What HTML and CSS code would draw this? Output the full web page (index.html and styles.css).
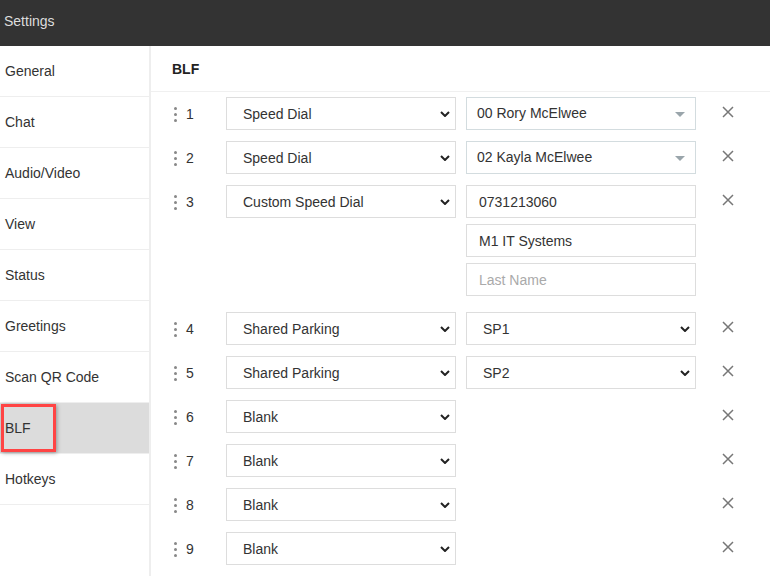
FILE: index.html
```html
<!DOCTYPE html>
<html lang="en">
<head>
    <meta charset="UTF-8">
    <title>Settings</title>
    <link rel="stylesheet" href="styles.css">
</head>
<body>

<div class="topbar">Settings</div>

<div class="layout">
    <!-- Menu laterale -->
    <ul class="sidebar">
        <li>General</li>
        <li>Chat</li>
        <li>Audio/Video</li>
        <li>View</li>
        <li>Status</li>
        <li>Greetings</li>
        <li>Scan QR Code</li>
        <li class="active">BLF</li>
        <li>Hotkeys</li>
    </ul>

    <div class="main">
        <h2>BLF</h2>

        <div class="rows">
            <!-- 1 -->
            <div class="row">
                <div class="num"><span class="handle"><i></i><i></i><i></i></span>1</div>
                <div class="sel"><select><option>Speed Dial</option></select><svg viewBox="0 0 10 6"><path d="M1 1l4 4 4-4"/></svg></div>
                <div class="combo">00 Rory McElwee<span class="caret"></span></div>
                <svg class="remove" viewBox="0 0 12 12"><path d="M1 1l10 10M11 1L1 11"/></svg>
            </div>

            <!-- 2 -->
            <div class="row">
                <div class="num"><span class="handle"><i></i><i></i><i></i></span>2</div>
                <div class="sel"><select><option>Speed Dial</option></select><svg viewBox="0 0 10 6"><path d="M1 1l4 4 4-4"/></svg></div>
                <div class="combo">02 Kayla McElwee<span class="caret"></span></div>
                <svg class="remove" viewBox="0 0 12 12"><path d="M1 1l10 10M11 1L1 11"/></svg>
            </div>

            <!-- 3 -->
            <div class="row tall">
                <div class="num"><span class="handle"><i></i><i></i><i></i></span>3</div>
                <div class="sel"><select><option>Custom Speed Dial</option></select><svg viewBox="0 0 10 6"><path d="M1 1l4 4 4-4"/></svg></div>
                <div class="stack">
                    <input type="text" value="0731213060">
                    <input type="text" value="M1 IT Systems">
                    <input type="text" placeholder="Last Name">
                </div>
                <svg class="remove" viewBox="0 0 12 12"><path d="M1 1l10 10M11 1L1 11"/></svg>
            </div>

            <!-- 4 -->
            <div class="row">
                <div class="num"><span class="handle"><i></i><i></i><i></i></span>4</div>
                <div class="sel"><select><option>Shared Parking</option></select><svg viewBox="0 0 10 6"><path d="M1 1l4 4 4-4"/></svg></div>
                <div class="sel"><select><option>SP1</option></select><svg viewBox="0 0 10 6"><path d="M1 1l4 4 4-4"/></svg></div>
                <svg class="remove" viewBox="0 0 12 12"><path d="M1 1l10 10M11 1L1 11"/></svg>
            </div>

            <!-- 5 -->
            <div class="row">
                <div class="num"><span class="handle"><i></i><i></i><i></i></span>5</div>
                <div class="sel"><select><option>Shared Parking</option></select><svg viewBox="0 0 10 6"><path d="M1 1l4 4 4-4"/></svg></div>
                <div class="sel"><select><option>SP2</option></select><svg viewBox="0 0 10 6"><path d="M1 1l4 4 4-4"/></svg></div>
                <svg class="remove" viewBox="0 0 12 12"><path d="M1 1l10 10M11 1L1 11"/></svg>
            </div>

            <!-- 6 -->
            <div class="row">
                <div class="num"><span class="handle"><i></i><i></i><i></i></span>6</div>
                <div class="sel"><select><option>Blank</option></select><svg viewBox="0 0 10 6"><path d="M1 1l4 4 4-4"/></svg></div>
                <div class="empty"></div>
                <svg class="remove" viewBox="0 0 12 12"><path d="M1 1l10 10M11 1L1 11"/></svg>
            </div>

            <!-- 7 -->
            <div class="row">
                <div class="num"><span class="handle"><i></i><i></i><i></i></span>7</div>
                <div class="sel"><select><option>Blank</option></select><svg viewBox="0 0 10 6"><path d="M1 1l4 4 4-4"/></svg></div>
                <div class="empty"></div>
                <svg class="remove" viewBox="0 0 12 12"><path d="M1 1l10 10M11 1L1 11"/></svg>
            </div>

            <!-- 8 -->
            <div class="row">
                <div class="num"><span class="handle"><i></i><i></i><i></i></span>8</div>
                <div class="sel"><select><option>Blank</option></select><svg viewBox="0 0 10 6"><path d="M1 1l4 4 4-4"/></svg></div>
                <div class="empty"></div>
                <svg class="remove" viewBox="0 0 12 12"><path d="M1 1l10 10M11 1L1 11"/></svg>
            </div>

            <!-- 9 -->
            <div class="row">
                <div class="num"><span class="handle"><i></i><i></i><i></i></span>9</div>
                <div class="sel"><select><option>Blank</option></select><svg viewBox="0 0 10 6"><path d="M1 1l4 4 4-4"/></svg></div>
                <div class="empty"></div>
                <svg class="remove" viewBox="0 0 12 12"><path d="M1 1l10 10M11 1L1 11"/></svg>
            </div>
        </div>
    </div>
</div>

</body>
</html>
```

FILE: styles.css
```css
body { margin: 0; font-family: "Liberation Sans", Arial, sans-serif; font-size: 14px; color: #333; background: #fff; overflow: hidden; }
.topbar { height: 46px; line-height: 43px; background: #333; color: #ddd; padding-left: 4px; }
.layout { display: flex; height: 530px; }

.sidebar { list-style: none; margin: 0; padding: 0; width: 149px; border-right: 2px solid #eee; }
.sidebar li { height: 50px; line-height: 50px; padding-left: 5px; border-bottom: 1px solid #eee; position: relative; }
.sidebar li.active { background: #dcdcdc; }
.sidebar li.active::after { content: ""; position: absolute; left: 1px; top: 1px; width: 49px; height: 42px; border: 3px solid #f44; box-shadow: 1px 1px 4px rgba(0, 0, 0, 0.35); }

.main { flex: 1; }
.main h2 { margin: 0; height: 45px; line-height: 46px; font-size: 14px; color: #222; padding-left: 21px; border-bottom: 1px solid #f0f0f0; }
.rows { padding-top: 5px; display: flex; flex-direction: column; gap: 11px; }
.row { display: flex; align-items: flex-start; padding-left: 21px; gap: 10px; }
.row.tall { margin-bottom: 5px; }

.num { width: 44px; height: 33px; display: flex; align-items: center; }
.handle { display: flex; flex-direction: column; gap: 3px; margin: 1px 9px 0 2px; }
.handle i { width: 3px; height: 3px; border-radius: 50%; background: #888; }

.sel { position: relative; width: 230px; height: 33px; }
.sel select { appearance: none; width: 100%; height: 33px; margin: 0; border: 1px solid #ddd; border-radius: 0; background: #fff; padding: 0 0 0 16px; font: inherit; color: #333; }
.sel svg { position: absolute; right: 6px; top: 14px; width: 10px; height: 6px; fill: none; stroke: #222; stroke-width: 2; pointer-events: none; }

.combo { position: relative; box-sizing: border-box; width: 230px; height: 33px; line-height: 31px; border: 1px solid #d3dcdf; padding-left: 10px; }
.caret { position: absolute; right: 10px; top: 14px; border-left: 5px solid transparent; border-right: 5px solid transparent; border-top: 5px solid #9aa5ab; }

.stack { display: flex; flex-direction: column; gap: 6px; width: 230px; }
.stack input { box-sizing: border-box; width: 230px; height: 33px; margin: 0; border: 1px solid #ddd; padding: 0 12px; font: inherit; color: #333; }
.stack input::placeholder { color: #aaa; }

.empty { width: 230px; height: 33px; }
.remove { width: 12px; height: 12px; margin: 9px 0 0 16px; fill: none; stroke: #777; stroke-width: 1.5; }
```
